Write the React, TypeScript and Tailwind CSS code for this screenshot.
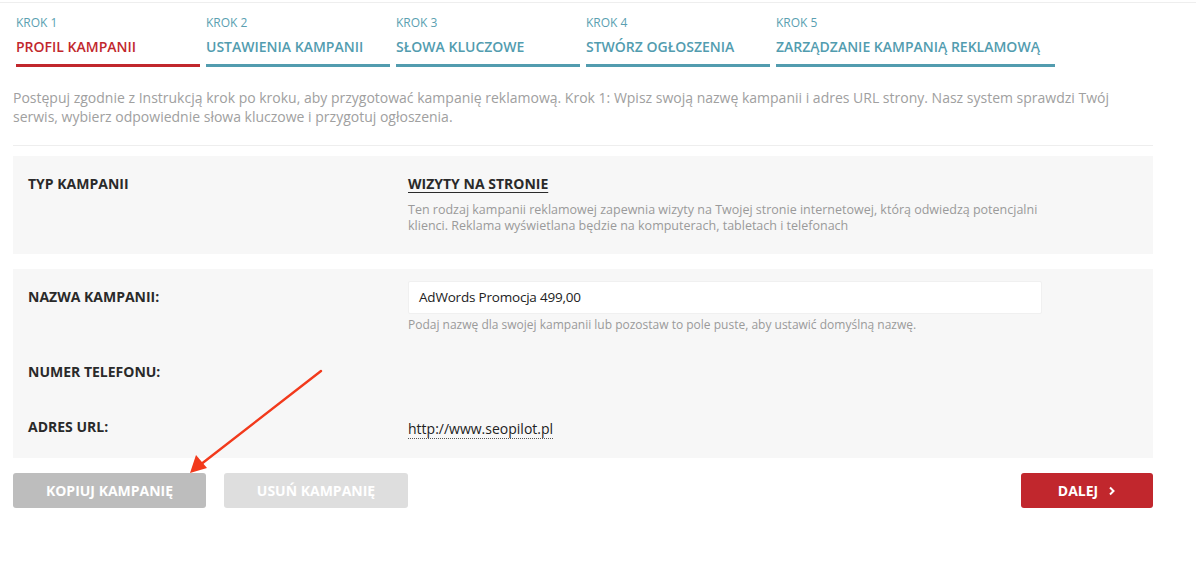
import React from "react";

const steps = [
  { n: "KROK 1", t: "PROFIL KAMPANII", active: true, w: "w-[184px]" },
  { n: "KROK 2", t: "USTAWIENIA KAMPANII", active: false, w: "w-[184px]" },
  { n: "KROK 3", t: "SŁOWA KLUCZOWE", active: false, w: "w-[184px]" },
  { n: "KROK 4", t: "STWÓRZ OGŁOSZENIA", active: false, w: "w-[184px]" },
  { n: "KROK 5", t: "ZARZĄDZANIE KAMPANIĄ REKLAMOWĄ", active: false, w: "w-[279px]" },
];

export default function App() {
  return (
    <div
      className="relative w-[1196px] h-[566px] bg-white overflow-hidden"
      style={{ fontFamily: '"Open Sans", "Liberation Sans", sans-serif' }}
    >
      <div className="h-[3px] border-b border-[#eeeeee]" />
      <div className="flex gap-[6px] pl-[16px] pt-[12px]">
        {steps.map((s) => (
          <div key={s.n} className={`${s.w} flex flex-col`}>
            <div className="text-[12px] leading-[16px] text-[#5b9fb1]">{s.n}</div>
            <div
              className={`mt-[7px] text-[14px] leading-[18px] font-semibold ${
                s.active ? "text-[#c1272d]" : "text-[#529caf]"
              }`}
            >
              {s.t}
            </div>
            <div className={`mt-[8px] h-[3px] ${s.active ? "bg-[#c1272d]" : "bg-[#529caf]"}`} />
          </div>
        ))}
      </div>

      <div className="mx-[13px] w-[1140px]">
        <p className="mt-[21px] text-[14px] leading-[19px] text-[#a0a0a0] pr-[20px]">
          Postępuj zgodnie z Instrukcją krok po kroku, aby przygotować kampanię reklamową. Krok 1: Wpisz swoją nazwę
          kampanii i adres URL strony. Nasz system sprawdzi Twój serwis, wybierz odpowiednie słowa kluczowe i przygotuj
          ogłoszenia.
        </p>
        <div className="mt-[19px] border-t border-[#eeeeee]" />

        <div className="mt-[10px] bg-[#f7f7f7] h-[98px] flex pt-[19px]">
          <div className="w-[395px] pl-[15px] text-[14px] font-bold text-[#2a2a2a] leading-[18px]">TYP KAMPANII</div>
          <div className="flex-1">
            <div className="text-[14px] font-bold text-[#2a2a2a] leading-[18px] underline underline-offset-[3px]">
              WIZYTY NA STRONIE
            </div>
            <div className="mt-[9px] w-[630px] text-[12.5px] leading-[16px] text-[#9a9a9a]">
              Ten rodzaj kampanii reklamowej zapewnia wizyty na Twojej stronie internetowej, którą odwiedzą potencjalni
              klienci. Reklama wyświetlana będzie na komputerach, tabletach i telefonach
            </div>
          </div>
        </div>

        <div className="mt-[15px] bg-[#f7f7f7] h-[189px] flex flex-col pt-[12px]">
          <div className="flex">
            <div className="w-[395px] pl-[15px] pt-[7px] text-[14px] font-bold text-[#2a2a2a] leading-[18px]">
              NAZWA KAMPANII:
            </div>
            <div className="flex-1">
              <div className="w-[634px] h-[33px] bg-white rounded-[2px] border border-[#f0f0f0] flex items-center pl-[10px] text-[13.5px] text-[#222] tracking-[-0.2px]">
                AdWords Promocja 499,00
              </div>
              <div className="mt-[3px] text-[12px] leading-[16px] text-[#9a9a9a]">
                Podaj nazwę dla swojej kampanii lub pozostaw to pole puste, aby ustawić domyślną nazwę.
              </div>
            </div>
          </div>
          <div className="mt-[30px] pl-[15px] text-[14px] font-bold text-[#2a2a2a] leading-[18px]">NUMER TELEFONU:</div>
          <div className="mt-[37px] flex">
            <div className="w-[395px] pl-[15px] text-[14px] font-bold text-[#2a2a2a] leading-[18px]">ADRES URL:</div>
            <div className="leading-[16px] pt-[2px]">
              <span className="text-[14px] leading-[18px] text-[#222] border-b border-dotted border-[#555]">
                http://www.seopilot.pl
              </span>
            </div>
          </div>
        </div>

        <div className="mt-[15px] flex items-center">
          <button className="w-[193px] h-[35px] rounded-[3px] bg-[#bdbdbd] text-white text-[14px] font-bold">
            KOPIUJ KAMPANIĘ
          </button>
          <button className="ml-[18px] w-[184px] h-[35px] rounded-[3px] bg-[#dedede] text-white text-[14px] font-bold">
            USUŃ KAMPANIĘ
          </button>
          <button className="ml-auto w-[132px] h-[35px] rounded-[3px] bg-[#c1272d] text-white text-[14px] font-bold flex items-center justify-center gap-[10px]">
            <span>DALEJ</span>
            <svg width="8" height="10" viewBox="0 0 8 10">
              <path d="M2 1.5 L5.5 5 L2 8.5" stroke="white" strokeWidth="2" fill="none" />
            </svg>
          </button>
        </div>
      </div>

      <svg className="absolute left-0 top-0 pointer-events-none" width="1196" height="566">
        <line x1="321" y1="371" x2="200" y2="465" stroke="#f23a1c" strokeWidth="2.4" strokeLinecap="round" />
        <polygon points="190,473 196,455 207,468" fill="#f23a1c" />
      </svg>
    </div>
  );
}
